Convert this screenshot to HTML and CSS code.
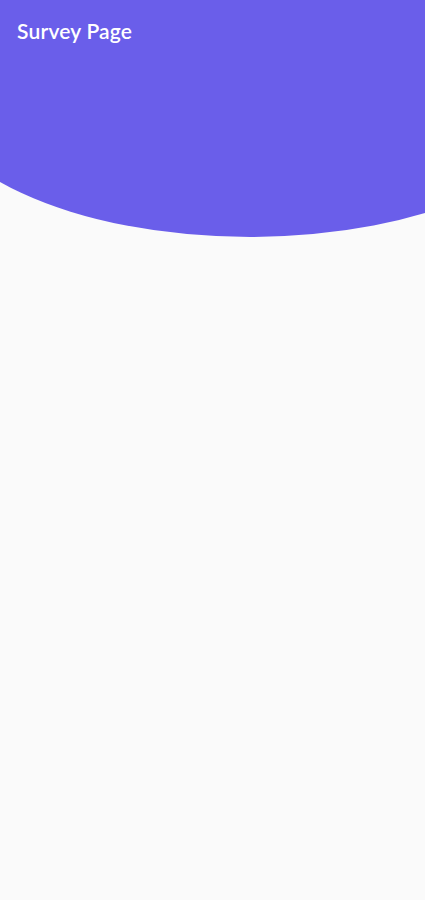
FILE: index.html
```html
<!DOCTYPE html>
<html lang="en">

<head>
    <meta charset="UTF-8">
    <meta name="viewport" content="width=device-width, initial-scale=1.0">
    <title>Survey Page</title>
    <link rel="stylesheet" href="styles.css">
</head>

<body>

    <div class="page">
        <header class="hero">
            <h1 class="title">Survey Page</h1>
        </header>
    </div>

</body>

</html>
```

FILE: styles.css
```css
body {
    font-family: Lato, "Open Sans", sans-serif;
    background-color: #fafafa;
    margin: 0;
    padding: 0;
    height: 900px;
    overflow: hidden;
}

.page {
    width: 425px;
    overflow: hidden;
    height: 100vh;
}

/* big ellipse, cut off by the screen edges */
.hero {
    width: 646px;
    height: 300px;
    margin: -63px 0 0 -73px;
    border-radius: 50%;
    background-color: #6a5eea;
    padding: 82px 0 0 90px;
    box-sizing: border-box;
}

.title {
    margin: 0;
    color: #fff;
    font-size: 21px;
    font-weight: 600;
    letter-spacing: 0.2px;
    line-height: 24px;
}
```
